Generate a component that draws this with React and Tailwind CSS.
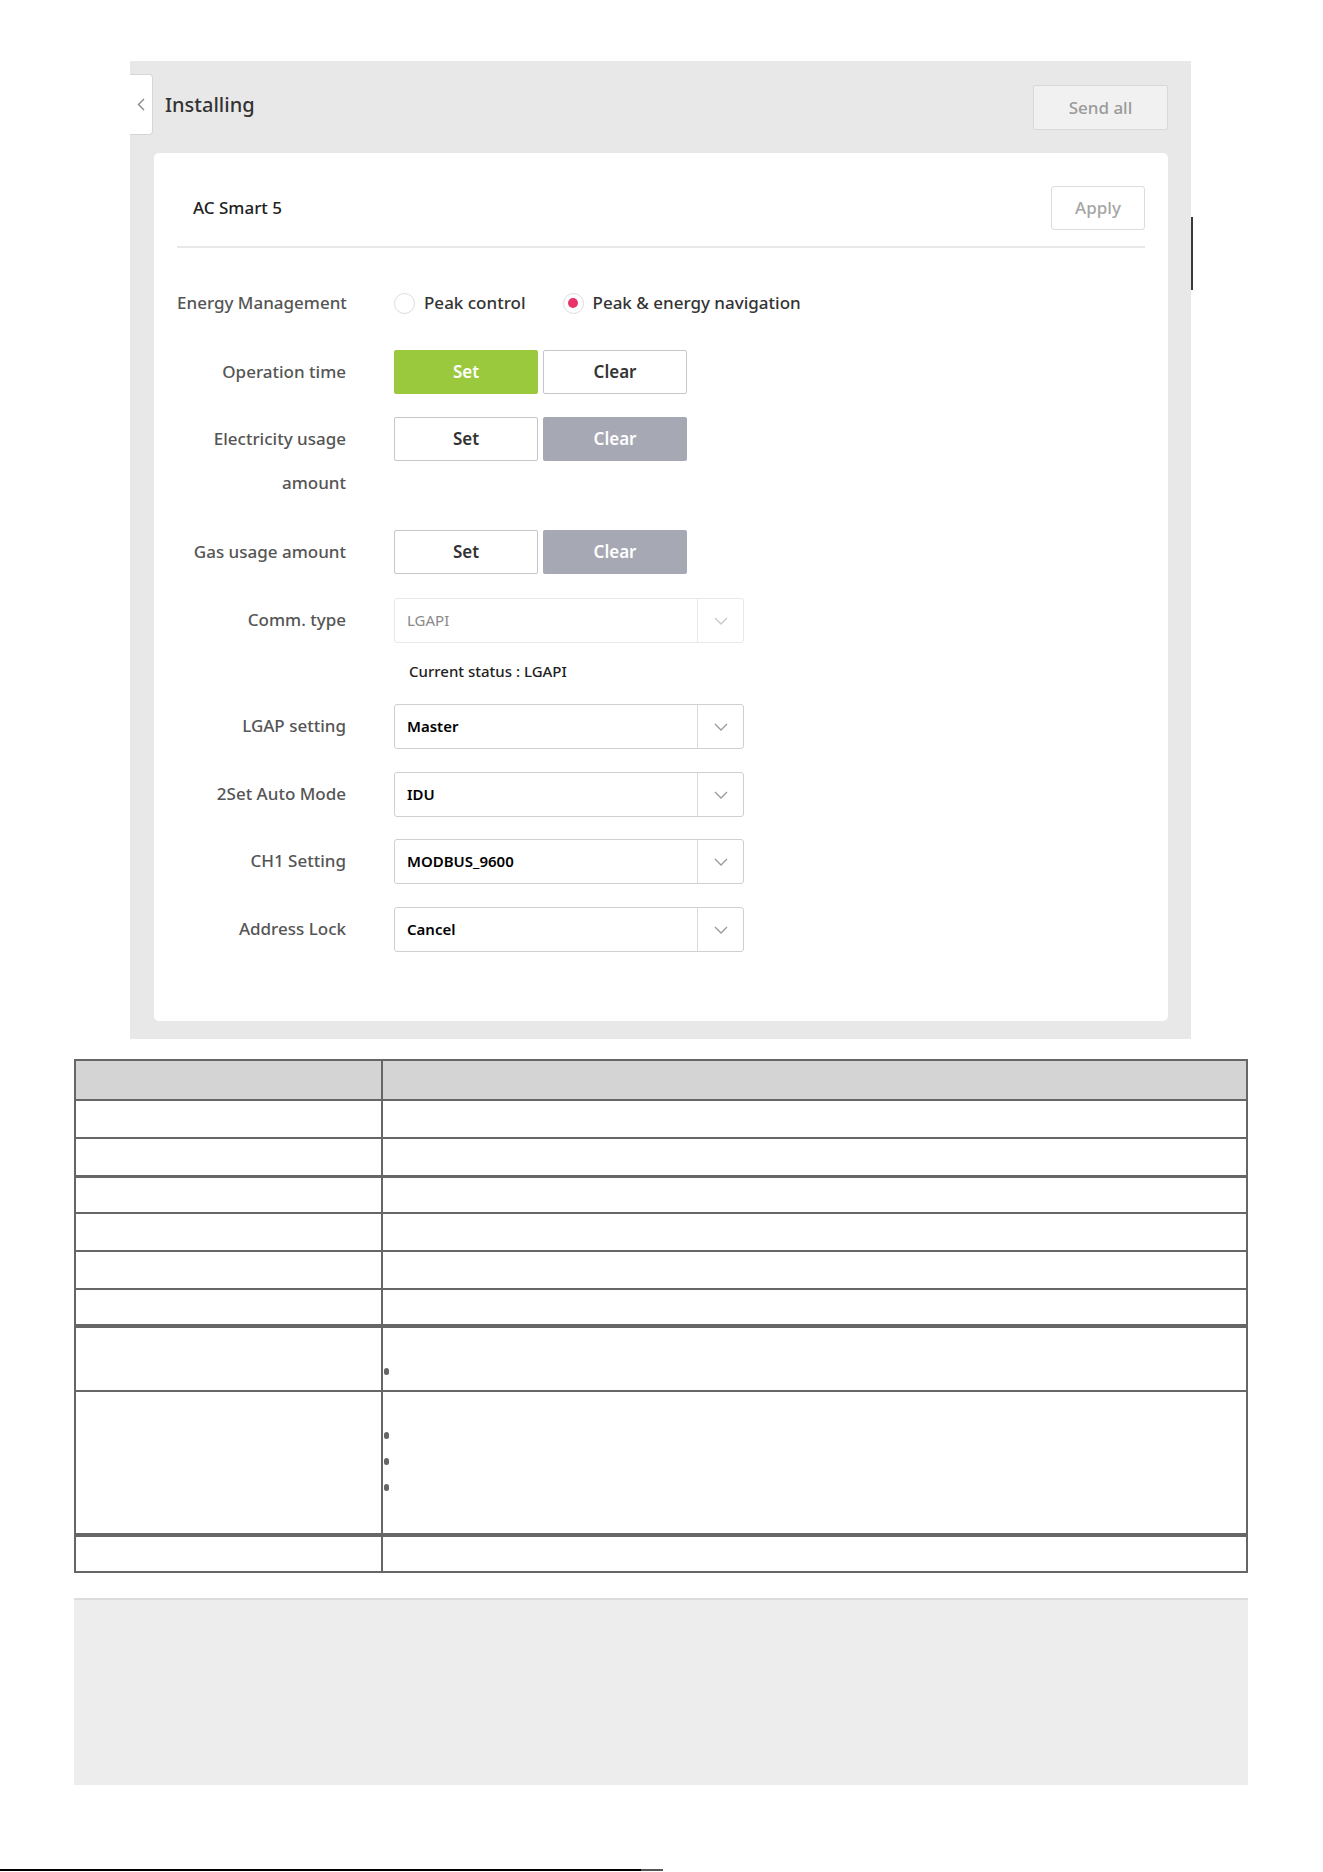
import React, { useState } from "react";

const font = { fontFamily: '"Noto Sans", "Liberation Sans", sans-serif' };

function Chevron({ className }) {
  return (
    <svg width="14" height="8" viewBox="0 0 14 8" fill="none" className={className}>
      <path d="M1 1l6 6 6-6" stroke="currentColor" strokeWidth="1.3" />
    </svg>
  );
}

function Row({ label, className = "", children }) {
  return (
    <div className={`flex items-start ${className}`}>
      <div className="w-[169px] shrink-0 whitespace-nowrap text-right text-[17px] font-medium leading-[44px] text-[#555]">
        {label}
      </div>
      <div className="ml-[48px] flex items-center">{children}</div>
    </div>
  );
}

function Radio({ checked, label, onClick }) {
  return (
    <button type="button" onClick={onClick} className="flex items-center">
      <span className="flex h-[21px] w-[21px] items-center justify-center rounded-full border border-[#dcdcdc] bg-white">
        {checked && <span className="h-[10px] w-[10px] rounded-full bg-[#e8336b]" />}
      </span>
      <span className="ml-[9px] text-[17px] font-medium text-[#333]">{label}</span>
    </button>
  );
}

// two-way Set / Clear toggle
function SetClear({ value, onChange, onColor }) {
  const base = "h-[44px] w-[144px] rounded-[2px] text-[17px] font-semibold";
  return (
    <div className="flex gap-[5px]">
      <button
        type="button"
        onClick={() => onChange("set")}
        className={`${base} ${value === "set" ? "bg-[#9bc93d] text-white" : "border border-[#c6c6c6] bg-white text-[#333]"}`}
      >
        Set
      </button>
      <button
        type="button"
        onClick={() => onChange("clear")}
        className={`${base} ${value === "clear" ? `${onColor} text-white` : "border border-[#c6c6c6] bg-white text-[#333]"}`}
      >
        Clear
      </button>
    </div>
  );
}

function Select({ value, disabled }) {
  return (
    <div
      className={`flex h-[45px] w-[350px] items-stretch rounded-[3px] border bg-white ${
        disabled ? "border-[#e8e8e8]" : "border-[#cfcfcf]"
      }`}
    >
      <div
        className={`flex flex-1 items-center pl-[12px] text-[15px] ${
          disabled ? "font-normal text-[#8a8a8a]" : "font-semibold text-black"
        }`}
      >
        {value}
      </div>
      <div
        className={`flex w-[46px] items-center justify-center border-l ${
          disabled ? "border-[#e8e8e8] text-[#c8c8c8]" : "border-[#d9d9d9] text-[#999]"
        }`}
      >
        <Chevron />
      </div>
    </div>
  );
}

function Cell({ bottom = "border-b-2", children, className = "" }) {
  return <td className={`border-2 ${bottom} border-[#666] ${className}`}>{children}</td>;
}

function Bullet() {
  return <div className="ml-[1px] h-[7px] w-[5px] rounded-full bg-[#666]" />;
}

export default function App() {
  const [mode, setMode] = useState("navigation");
  const [opTime, setOpTime] = useState("set");
  const [elec, setElec] = useState("clear");
  const [gas, setGas] = useState("clear");

  return (
    <div className="relative min-h-[1872px] bg-white" style={font}>
      {/* settings screen */}
      <div className="flex pt-[61px]">
        <div className="ml-[130px] h-[978px] w-[1061px] bg-[#e8e8e8]">
          <div className="flex items-start pt-[13px]">
            <div className="flex h-[61px] w-[23px] items-center justify-center rounded-r-[4px] border border-l-0 border-[#d6d6d6] bg-white text-[#888]">
              <svg width="8" height="13" viewBox="0 0 8 13" fill="none">
                <path d="M7 1L1.5 6.5 7 12" stroke="currentColor" strokeWidth="1.4" />
              </svg>
            </div>
            <div className="ml-[12px] h-[61px] text-[20px] font-medium leading-[61px] text-[#333]">
              Installing
            </div>
            <button
              type="button"
              className="ml-auto mr-[23px] mt-[11px] h-[45px] w-[135px] rounded-[2px] border border-[#d8d8d8] bg-[#f1f1f1] text-[17px] font-medium leading-[40px] text-[#9a9a9a]"
            >
              Send all
            </button>
          </div>

          <div className="ml-[24px] mr-[23px] mt-[18px] h-[868px] rounded-[5px] bg-white px-[23px]">
            <div className="flex items-center border-b-2 border-[#e8e8e8] pb-[16px] pt-[33px]">
              <div className="pl-[16px] text-[17px] font-medium leading-[24px] text-[#222]">AC Smart 5</div>
              <button
                type="button"
                className="ml-auto h-[44px] w-[94px] rounded-[3px] border border-[#dcdcdc] bg-white text-[17px] font-medium text-[#a5a5a5]"
              >
                Apply
              </button>
            </div>

            <Row label="Energy Management" className="mt-[33px]">
              <div className="flex h-[44px] items-center">
                <Radio checked={mode === "peak"} label="Peak control" onClick={() => setMode("peak")} />
                <div className="ml-[37px]">
                  <Radio
                    checked={mode === "navigation"}
                    label="Peak & energy navigation"
                    onClick={() => setMode("navigation")}
                  />
                </div>
              </div>
            </Row>

            <Row label="Operation time" className="mt-[25px]">
              <SetClear value={opTime} onChange={setOpTime} onColor="bg-[#a6a8b3]" />
            </Row>

            <Row
              label={
                <>
                  Electricity usage
                  <br />
                  amount
                </>
              }
              className="mt-[23px]"
            >
              <SetClear value={elec} onChange={setElec} onColor="bg-[#a6a8b3]" />
            </Row>

            <Row label="Gas usage amount" className="mt-[25px]">
              <SetClear value={gas} onChange={setGas} onColor="bg-[#a6a8b3]" />
            </Row>

            <Row label="Comm. type" className="mt-[24px]">
              <Select value="LGAPI" disabled />
            </Row>
            <div className="ml-[232px] mt-[15px] text-[15px] font-medium leading-[26px] text-[#222]">
              Current status : LGAPI
            </div>

            <Row label="LGAP setting" className="mt-[20px]">
              <Select value="Master" />
            </Row>
            <Row label="2Set Auto Mode" className="mt-[23px]">
              <Select value="IDU" />
            </Row>
            <Row label="CH1 Setting" className="mt-[22px]">
              <Select value="MODBUS_9600" />
            </Row>
            <Row label="Address Lock" className="mt-[23px]">
              <Select value="Cancel" />
            </Row>
          </div>
        </div>
        {/* scrollbar thumb */}
        <div className="mt-[156px] h-[73px] w-[2px] bg-[#3a3a3a]" />
      </div>

      {/* description table */}
      <table className="ml-[74px] mt-[20px] w-[1174px] border-collapse">
        <tbody>
          <tr className="h-[40px] bg-[#d4d4d4]">
            <Cell className="w-[307px]" />
            <Cell />
          </tr>
          <tr className="h-[38px]">
            <Cell />
            <Cell />
          </tr>
          <tr className="h-[38px]">
            <Cell bottom="border-b-[3px]" />
            <Cell bottom="border-b-[3px]" />
          </tr>
          <tr className="h-[37px]">
            <Cell />
            <Cell />
          </tr>
          <tr className="h-[38px]">
            <Cell />
            <Cell />
          </tr>
          <tr className="h-[38px]">
            <Cell />
            <Cell />
          </tr>
          <tr className="h-[37px]">
            <Cell bottom="border-b-[4px]" />
            <Cell bottom="border-b-[4px]" />
          </tr>
          <tr className="h-[65px]">
            <Cell />
            <Cell className="p-0 align-top">
              <div className="mt-[40px]">
                <Bullet />
              </div>
            </Cell>
          </tr>
          <tr className="h-[144px]">
            <Cell bottom="border-b-[4px]" />
            <Cell bottom="border-b-[4px]" className="p-0 align-top">
              <div className="mt-[40px] flex flex-col gap-[19px]">
                <Bullet />
                <Bullet />
                <Bullet />
              </div>
            </Cell>
          </tr>
          <tr className="h-[37px]">
            <Cell />
            <Cell />
          </tr>
        </tbody>
      </table>

      {/* note box */}
      <div className="ml-[74px] mt-[25px] h-[187px] w-[1174px] border-t-2 border-[#dcdcdc] bg-[#ededed]" />

      {/* page edge */}
      <div className="mt-[84px] flex">
        <div className="h-[2px] w-[641px] bg-black" />
        <div className="h-[2px] w-[22px] bg-[#555]" />
      </div>
    </div>
  );
}
